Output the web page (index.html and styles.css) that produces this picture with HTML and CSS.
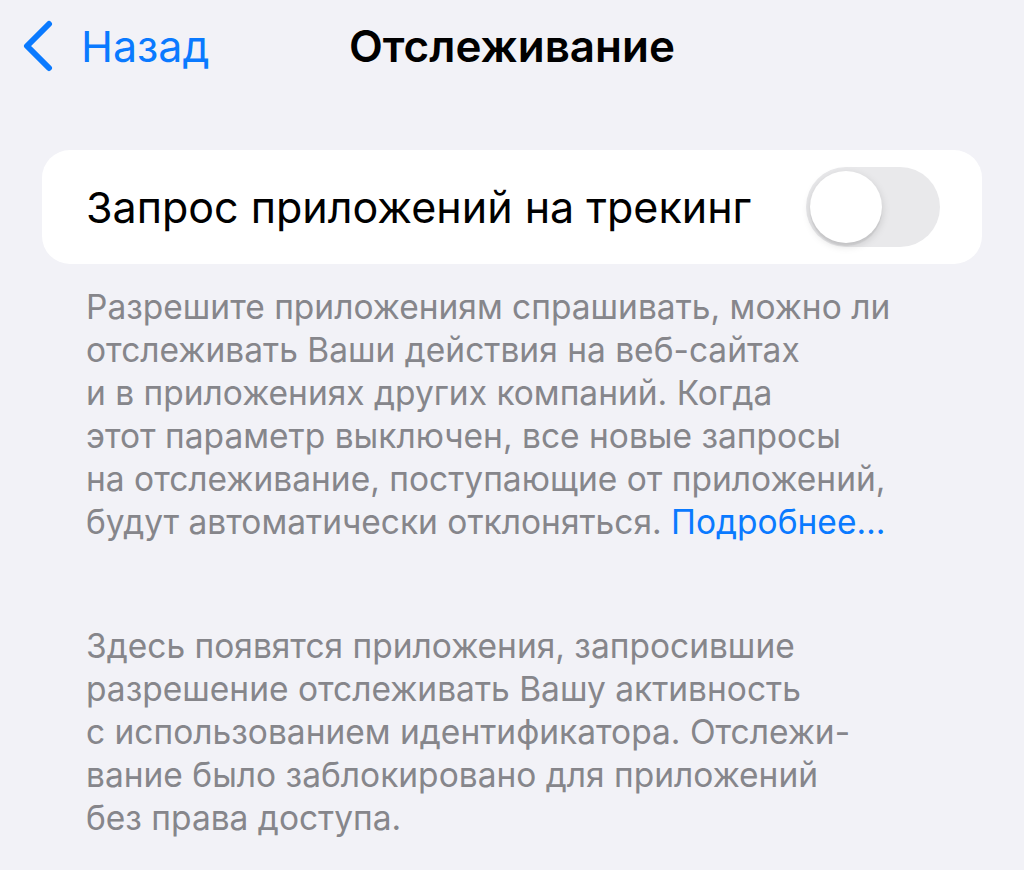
FILE: index.html
```html
<!DOCTYPE html>
<html lang="ru">
<head>
  <meta charset="UTF-8">
  <meta name="viewport" content="width=device-width, initial-scale=1.0">
  <title>Отслеживание</title>
  <link rel="stylesheet" href="styles.css">
</head>
<body>
  <div class="nav-bar">
    <a class="back" href="#">
      <svg class="chevron" width="32" height="52" viewBox="0 0 32 52">
        <path d="M27 4 L5 26 L27 48" fill="none" stroke="#0a7aff" stroke-width="6" stroke-linecap="round" stroke-linejoin="round"/>
      </svg>
      <span class="back-label">Назад</span>
    </a>
    <h1 class="title">Отслеживание</h1>
  </div>

  <div class="group">
    <div class="row">
      <span class="row-label">Запрос приложений на трекинг</span>
      <div class="switch"><div class="knob"></div></div>
    </div>
  </div>

  <p class="footer">
    Разрешите приложениям спрашивать, можно ли<br>
    отслеживать Ваши действия на веб-сайтах<br>
    и в приложениях других компаний. Когда<br>
    этот параметр выключен, все новые запросы<br>
    на отслеживание, поступающие от приложений,<br>
    будут автоматически отклоняться. <a class="link" href="#">Подробнее…</a>
  </p>

  <p class="footer footer-second">
    Здесь появятся приложения, запросившие<br>
    разрешение отслеживать Вашу активность<br>
    с использованием идентификатора. Отслежи-<br>
    вание было заблокировано для приложений<br>
    без права доступа.
  </p>
</body>
</html>
```

FILE: styles.css
```css
body {
  background-color: #f2f2f7;
  color: #000;
  font-family: Inter, "Noto Sans", sans-serif;
  margin: 0;
  padding: 0;
  height: 870px;
  overflow: hidden;
}
.nav-bar {
  position: relative;
  height: 92px;
  display: flex;
  align-items: center;
}
.back {
  display: flex;
  align-items: center;
  text-decoration: none;
  color: #0a7aff;
  padding-left: 22px;
}
.chevron {
  display: block;
}
.back-label {
  font-size: 43px;
  margin-left: 27px;
}
.title {
  position: absolute;
  left: 0;
  right: 0;
  top: 0;
  height: 92px;
  line-height: 92px;
  margin: 0;
  text-align: center;
  font-size: 44px;
  font-weight: 600;
  pointer-events: none;
}
.group {
  margin: 58px 42px 0;
  background: #fff;
  border-radius: 28px;
}
.row {
  height: 114px;
  display: flex;
  align-items: center;
  justify-content: space-between;
  padding: 0 42px 0 44px;
}
.row-label {
  font-size: 43px;
}
.switch {
  width: 134px;
  height: 80px;
  border-radius: 40px;
  background: #e9e9eb;
  padding: 4px;
  box-sizing: border-box;
}
.knob {
  width: 72px;
  height: 72px;
  border-radius: 50%;
  background: #fff;
  box-shadow: 0 3px 8px rgba(0, 0, 0, 0.15), 0 3px 1px rgba(0, 0, 0, 0.06);
}
.footer {
  margin: 22px 0 0 86px;
  font-size: 33.5px;
  line-height: 43px;
  color: #86868b;
}
.footer-second {
  margin-top: 81px;
}
.link {
  color: #0a7aff;
  text-decoration: none;
}
```
